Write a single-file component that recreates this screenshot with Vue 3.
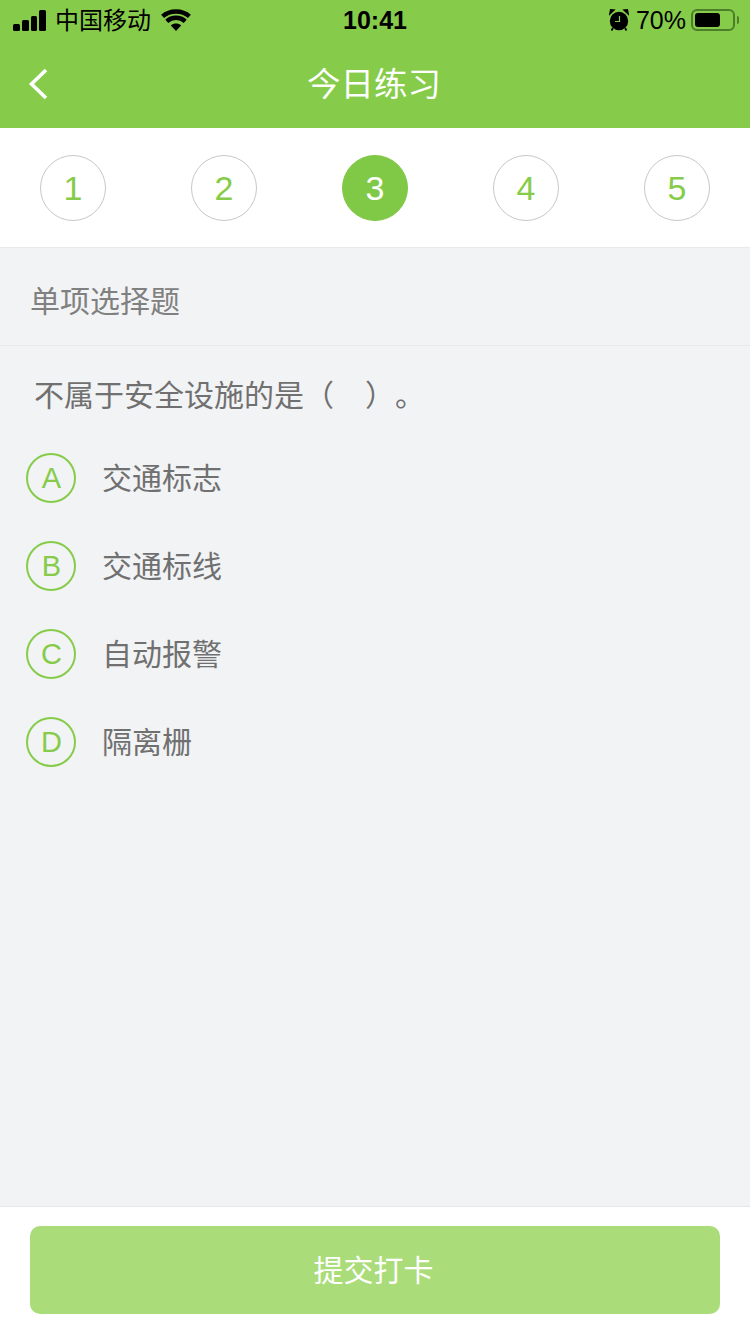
<template>
  <div class="page">
    <div class="header">
      <div class="status-bar">
        <div class="status-left">
          <div class="signal">
            <span v-for="h in signalBars" :key="h" class="bar" :style="{ height: h + 'px' }"></span>
          </div>
          <span class="carrier">中国移动</span>
          <svg class="wifi" width="30" height="23" viewBox="0 0 30 23">
            <path d="M15 22 L9.800 16.400 C12.800 13.800 17.200 13.800 20.200 16.400 Z" fill="#000" />
            <path d="M5.800 12.400 C10.800 7.600 19.200 7.600 24.200 12.400" fill="none" stroke="#000" stroke-width="4.400" />
            <path d="M1.600 7.400 C8.800 0.800 21.200 0.800 28.400 7.400" fill="none" stroke="#000" stroke-width="4.400" />
          </svg>
        </div>
        <div class="time">10:41</div>
        <div class="status-right">
          <svg class="alarm" width="20" height="22" viewBox="0 0 20 22">
            <circle cx="10" cy="12" r="9.200" fill="#000" />
            <path d="M10.500 7 V12.500 H6" fill="none" stroke="#86cc4a" stroke-width="1.200" />
            <path d="M0.800 5 L5 1 L1.600 0.800 Z M19.200 5 L15 1 L18.400 0.800 Z" fill="#000" stroke="#000" stroke-width="1.400" />
            <path d="M4 19 L2.500 21.500 M16 19 L17.500 21.500" stroke="#000" stroke-width="1.800" />
          </svg>
          <span class="battery-text">70%</span>
          <div class="battery">
            <div class="battery-fill"></div>
          </div>
          <div class="battery-cap"></div>
        </div>
      </div>
      <div class="nav">
        <svg class="back" width="24" height="36" viewBox="0 0 24 36">
          <path d="M20 4 L5.500 18 L20 32" fill="none" stroke="#fff" stroke-width="3.600" />
        </svg>
        <span class="title">今日练习</span>
      </div>
    </div>

    <div class="steps">
      <div
        v-for="n in 5"
        :key="n"
        :class="['step', { 'step-active': n === current }]"
      >{{ n }}</div>
    </div>

    <div class="content">
      <div class="section-label"><span>单项选择题</span></div>
      <div class="question">不属于安全设施的是（<span class="blank"></span>）。</div>
      <div class="options">
        <div v-for="opt in options" :key="opt.key" class="option">
          <div class="option-key">{{ opt.key }}</div>
          <span class="option-text">{{ opt.text }}</span>
        </div>
      </div>
    </div>

    <div class="footer">
      <div class="submit">提交打卡</div>
    </div>
  </div>
</template>

<script setup>
const signalBars = [7, 11, 15, 21]
const current = 3
const options = [
  { key: 'A', text: '交通标志' },
  { key: 'B', text: '交通标线' },
  { key: 'C', text: '自动报警' },
  { key: 'D', text: '隔离栅' }
]
</script>

<style>
html, body {
  margin: 0;
  padding: 0;
}
</style>

<style scoped>
.page {
  width: 750px;
  height: 1334px;
  display: flex;
  flex-direction: column;
  background-color: #f2f3f5;
  font-family: "Liberation Sans", "Noto Sans CJK SC", sans-serif;
  overflow: hidden;
}

.header {
  background-color: #86cc4a;
}

.status-bar {
  height: 40px;
  display: flex;
  align-items: center;
  justify-content: space-between;
  position: relative;
  color: #000;
}

.status-left {
  display: flex;
  align-items: center;
  padding-left: 13px;
}

.signal {
  display: flex;
  align-items: flex-end;
  gap: 2px;
  height: 21px;
}

.bar {
  width: 6.750px;
  background-color: #000;
  border-radius: 1.500px;
}

.carrier {
  font-size: 24px;
  margin-left: 9px;
  padding-bottom: 4px;
}

.wifi {
  margin-left: 10px;
}

.time {
  position: absolute;
  left: 0;
  right: 0;
  text-align: center;
  font-size: 25px;
  font-weight: bold;
}

.status-right {
  display: flex;
  align-items: center;
  padding-right: 11px;
}

.battery-text {
  font-size: 25px;
  margin-left: 7px;
}

.battery {
  width: 44px;
  height: 22px;
  box-sizing: border-box;
  margin-left: 5px;
  padding: 2px;
  border: 2px solid #4d7e2a;
  border-radius: 6px;
}

.battery-fill {
  width: 25px;
  height: 100%;
  background-color: #000;
  border-radius: 3px;
}

.battery-cap {
  width: 2px;
  height: 8px;
  margin-left: 2px;
  background-color: #4d7e2a;
  border-radius: 0 2px 2px 0;
}

.nav {
  height: 88px;
  display: flex;
  align-items: center;
  justify-content: center;
  position: relative;
}

.back {
  position: absolute;
  left: 26px;
  top: 26px;
}

.title {
  font-size: 33.500px;
  color: #fff;
  margin: -5px 2px 0 0;
}

.steps {
  height: 120px;
  padding: 27px 40px 0;
  box-sizing: border-box;
  display: flex;
  justify-content: space-between;
  background-color: #fff;
  border-bottom: 1px solid #e8e9eb;
  flex-shrink: 0;
}

.step {
  width: 66px;
  height: 66px;
  box-sizing: border-box;
  border: 1px solid #c8c8c8;
  border-radius: 50%;
  display: flex;
  align-items: center;
  justify-content: center;
  font-size: 34px;
  color: #86cc4a;
}

.step-active {
  background-color: #80c946;
  border-color: #80c946;
  color: #fff;
}

.content {
  flex: 1;
}

.section-label {
  height: 98px;
  box-sizing: border-box;
  padding: 4px 0 0 30px;
  border-bottom: 1px solid #e8e9eb;
  display: flex;
  align-items: center;
  font-size: 30px;
  color: #808080;
}

.question {
  padding: 34px 0 0 34px;
  font-size: 30px;
  line-height: 32px;
  color: #707070;
  text-spacing-trim: space-all;
}

.blank {
  display: inline-block;
  width: 31px;
}

.options {
  margin-top: 41px;
  padding-left: 26px;
  display: flex;
  flex-direction: column;
  gap: 38px;
}

.option {
  display: flex;
  align-items: center;
  height: 50px;
}

.option-key {
  width: 50px;
  height: 50px;
  box-sizing: border-box;
  padding-left: 1px;
  border: 2px solid #86cc4a;
  border-radius: 50%;
  display: flex;
  align-items: center;
  justify-content: center;
  font-size: 29px;
  color: #86cc4a;
}

.option-text {
  margin-left: 26px;
  padding-bottom: 5px;
  font-size: 30px;
  color: #707070;
}

.footer {
  height: 128px;
  box-sizing: border-box;
  padding: 19px 30px 0;
  background-color: #fff;
  border-top: 1px solid #e6e7e9;
  flex-shrink: 0;
}

.submit {
  height: 88px;
  box-sizing: border-box;
  padding: 0 3px 4px 0;
  border-radius: 10px;
  background-color: #aadc79;
  color: #fff;
  font-size: 30px;
  display: flex;
  align-items: center;
  justify-content: center;
}
</style>
